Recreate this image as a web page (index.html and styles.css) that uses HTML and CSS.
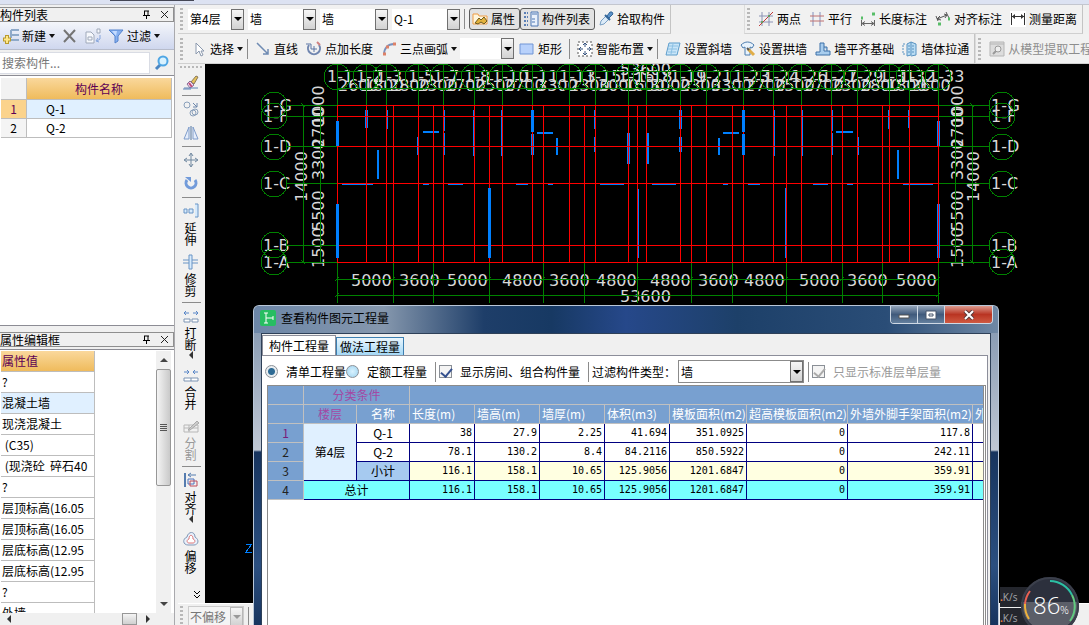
FILE: index.html
```html
<!DOCTYPE html>
<html lang="zh-CN">
<head>
    <meta charset="UTF-8">
    <meta name="viewport" content="width=device-width, initial-scale=1.0">
    <title>查看构件图元工程量</title>
    <link rel="stylesheet" href="styles.css">
</head>
<body>
<div class="app">
    <div class="strip"><span class="strip-mark"></span></div>
    <div class="main">

        <!-- left docks -->
        <aside class="docks">
            <section class="dock dock-list">
                <header class="dock-title">
                    <h2>构件列表</h2>
                    <button class="mini" aria-label="固定"><svg width="9" height="10" viewBox="0 0 9 10"><path d="M2 1h5M2.500 1v4M1 5.500h7M4.500 6v3M6 1v4" stroke="#000" fill="none"/></svg></button>
                    <button class="mini" aria-label="关闭"><svg width="9" height="9" viewBox="0 0 9 9"><path d="M1 1l7 7M8 1L1 8" stroke="#222" fill="none"/></svg></button>
                </header>
                <div class="dock-tools">
                    <button class="flat"><svg class="icon" viewBox="0 0 16 16"><path d="M8 2h8M8 7h8M8 12h8M8 2v8" stroke="#8ea9c9" stroke-width="2" fill="none"/><path d="M4 7v9M0 11.500h8" stroke="#b99a2e" stroke-width="4"/><path d="M4 8v7M1 11.500h6" stroke="#ffe889" stroke-width="2"/></svg>新建<i class="caret"></i></button>
                    <button class="flat" aria-label="删除"><svg class="icon" viewBox="0 0 16 16"><path d="M2 2l11 12M13 2L2 14" stroke="#747474" stroke-width="2" fill="none"/></svg></button>
                    <button class="flat" aria-label="复制"><svg class="icon" viewBox="0 0 16 16"><path d="M1 4h5l3 3v8H1zM3 9h4v3H3zM12 1h3v4h-3z" fill="#f6f8fc" stroke="#9fa9ba"/><path d="M15 7v4l-3 2M13 10l-2 3 3 1" fill="none" stroke="#86a5dc"/></svg></button>
                    <button class="flat"><svg class="icon" viewBox="0 0 16 16"><path d="M1 2h14l-5 6v5l-3 2V8z" fill="#86b0f0" stroke="#5583cd"/><path d="M4 3h5L8 8z" fill="#c5dcff"/></svg>过滤<i class="caret"></i></button>
                </div>
                <div class="search">
                    <input type="text" placeholder="搜索构件..." aria-label="搜索构件">
                    <button class="flat" aria-label="搜索"><svg class="icon" viewBox="0 0 16 16"><path d="M7 9l-5 5" stroke="#4b86c2" stroke-width="3"/><circle cx="9" cy="6" r="4.500" fill="#d9f2ff" stroke="#4fa6e4" stroke-width="2"/></svg></button>
                </div>
                <div class="list-box">
                    <table class="parts">
                        <tr><th></th><th>构件名称</th></tr>
                        <tr class="on"><td>1</td><td>Q-1</td></tr>
                        <tr><td>2</td><td>Q-2</td></tr>
                    </table>
                </div>
            </section>

            <section class="dock dock-props">
                <header class="dock-title">
                    <h2>属性编辑框</h2>
                    <button class="mini" aria-label="固定"><svg width="9" height="10" viewBox="0 0 9 10"><path d="M2 1h5M2.500 1v4M1 5.500h7M4.500 6v3M6 1v4" stroke="#000" fill="none"/></svg></button>
                    <button class="mini" aria-label="关闭"><svg width="9" height="9" viewBox="0 0 9 9"><path d="M1 1l7 7M8 1L1 8" stroke="#222" fill="none"/></svg></button>
                </header>
                <div class="props-box">
                    <div class="props-scroll">
                        <table class="props">
                            <tr><th>属性值</th></tr>
                            <tr><td>?</td></tr>
                            <tr class="on"><td>混凝土墙</td></tr>
                            <tr><td>现浇混凝土</td></tr>
                            <tr><td>&nbsp;(C35)</td></tr>
                            <tr><td>&nbsp;(现浇砼&nbsp; 碎石40</td></tr>
                            <tr><td>?</td></tr>
                            <tr><td>层顶标高(16.05</td></tr>
                            <tr><td>层顶标高(16.05</td></tr>
                            <tr><td>层底标高(12.95</td></tr>
                            <tr><td>层底标高(12.95</td></tr>
                            <tr><td>?</td></tr>
                            <tr><td>外墙</td></tr>
                        </table>
                    </div>
                    <div class="vbar">
                        <i class="tri up"></i>
                        <div class="vthumb"><i></i><i></i><i></i><i></i></div>
                        <i class="tri down"></i>
                    </div>
                </div>
                <div class="hbar"><i class="tri left"></i><div class="hthumb"></div><i class="tri right"></i></div>
            </section>
        </aside>

        <div class="work">
            <!-- toolbar row 1 -->
            <div class="bars">
                <div class="toolbar">
                    <i class="grip"></i>
                    <div class="combo short"><select aria-label="楼层"><option>第4层</option></select><i class="drop"></i></div>
                    <div class="combo"><select aria-label="构件类型"><option>墙</option></select><i class="drop"></i></div>
                    <div class="combo"><select aria-label="构件类别"><option>墙</option></select><i class="drop"></i></div>
                    <div class="combo"><select aria-label="构件"><option>Q-1</option></select><i class="drop"></i></div>
                    <i class="sep"></i>
                    <button class="tool pressed"><svg class="icon" viewBox="0 0 16 16"><path d="M1 13V3h5l1 2h8v8z" fill="#fff6dd" stroke="#ef9c45"/><path d="M3 12l4-5 2 2 3-3 3 4-3 3-3-2-3 2z" fill="#e3b23c" stroke="#6b5a1f"/></svg>属性</button>
                    <button class="tool pressed"><svg class="icon" viewBox="0 0 16 16"><path d="M1 2h4M1 6h4M1 10h4M1 14h4" stroke="#5b7fb5" stroke-width="2" stroke-dasharray="2 1"/><path d="M8 1h7v14H8z" fill="#e8f0fb" stroke="#4d77b3"/><path d="M9 3h5M9 8h3M9 11h3" stroke="#4d77b3"/></svg>构件列表</button>
                    <button class="tool"><svg class="icon" viewBox="0 0 16 16"><path d="M2 14l1-4 5-5 3 3-5 5z" fill="#dcebf8" stroke="#7aa0c4"/><path d="M7 4l5 5" stroke="#336699" stroke-width="2"/><path d="M9 5l3-4h2l1 2-4 4z" fill="#5c92c8" stroke="#336699"/></svg>拾取构件</button>
                </div>
                <div class="toolbar second">
                    <i class="grip"></i>
                    <button class="tool"><svg class="icon" viewBox="0 0 16 16"><path d="M4 1v14M11 1v14M1 5h14M1 11h14" stroke="#8b93b5"/><path d="M1 15L15 1" stroke="#c03a3a"/><circle cx="4" cy="11" r="1" fill="#52a852"/><circle cx="11" cy="5" r="1" fill="#52a852"/></svg>两点</button>
                    <button class="tool"><svg class="icon" viewBox="0 0 16 16"><path d="M4 1v14M11 1v14" stroke="#8290bd"/><path d="M1 5h14M1 10h14" stroke="#c07070"/></svg>平行</button>
                    <button class="tool"><svg class="icon" viewBox="0 0 16 16"><path d="M1.500 9v6M14.500 9v6M2 12.500h12M5 10.500l-3 2 3 2M11 10.500l3 2-3 2" stroke="#666" fill="none"/><path d="M1 7h2M12 3h3" stroke="#57bd67" stroke-width="3"/></svg>长度标注</button>
                    <button class="tool"><svg class="icon" viewBox="0 0 16 16"><path d="M1 5l2 5M11 1l3 6M2 8l10-4M5 5L2 8l4 1M9 3l3 1-2 3" stroke="#555" fill="none"/><path d="M3 13h3M13 8h2" stroke="#57bd67" stroke-width="3"/></svg>对齐标注</button>
                    <button class="tool"><svg class="icon" viewBox="0 0 16 16"><path d="M0 0h16v16H0z" fill="#fff"/><path d="M1.500 2v12M14.500 2v12M2 5.500h12" stroke="#333"/><path d="M5 3L2 5.500 5 8zM11 3l3 2.500L11 8z" fill="#333"/></svg>测量距离</button>
                </div>
            </div>

            <!-- toolbar row 2 -->
            <div class="bars low">
                <div class="toolbar">
                    <i class="grip"></i>
                    <button class="tool menu"><svg class="icon" viewBox="0 0 16 16"><path d="M5 2v11l3-3 2 5 2-1-2-4h3z" fill="#fff" stroke="#8a98ad"/></svg>选择<i class="caret"></i></button>
                    <i class="sep"></i>
                    <button class="tool"><svg class="icon" viewBox="0 0 16 16"><path d="M2 2l11 11M13 8v5H8" stroke="#6f8bb3" stroke-width="1.500" fill="none"/></svg>直线</button>
                    <button class="tool"><svg class="icon" viewBox="0 0 16 16"><path d="M3 4a6 6 0 1 0 10 0" stroke="#7086b0" stroke-width="2" fill="none"/><path d="M0 3h5v5M8 5v6M5 8h6" stroke="#5d76a6" fill="none"/><path d="M11 1l3 3" stroke="#d08080" stroke-width="2"/></svg>点加长度</button>
                    <button class="tool menu"><svg class="icon" viewBox="0 0 16 16"><path d="M3 14C3 7 7 3 13 3" stroke="#7991bd" stroke-width="2" fill="none"/><path d="M2 13h3M5 6h3M12 3h3" stroke="#dd8168" stroke-width="3"/></svg>三点画弧<i class="caret"></i></button>
                    <div class="combo narrow"><select aria-label="画法"><option></option></select><i class="drop"></i></div>
                    <button class="tool"><svg class="icon" viewBox="0 0 16 16"><path d="M1 3h13v10H1z" fill="#b8d1fb" stroke="#7195d5"/></svg>矩形</button>
                    <i class="sep"></i>
                    <button class="tool menu"><svg class="icon" viewBox="0 0 16 16"><path d="M1 1h14v14H1z" fill="#fff" stroke="#555" stroke-dasharray="2 2"/><path d="M8 2v4M8 10v4M2 8h4M10 8h4M6 4l2-2 2 2M6 12l2 2 2-2M4 6L2 8l2 2M12 6l2 2-2 2" stroke="#35527e" fill="none"/></svg>智能布置<i class="caret"></i></button>
                    <i class="sep"></i>
                    <button class="tool"><svg class="icon" viewBox="0 0 16 16"><path d="M4 2h11l-3 12H1z" fill="#c9e5f8" stroke="#5d9dcb"/><path d="M4 5h9M3 8h9M3 11h8M8 3L6 13" stroke="#8dc1e4"/></svg>设置斜墙</button>
                    <button class="tool"><svg class="icon" viewBox="0 0 16 16"><path d="M1 4c4-4 9-4 13 0l-2 3-2-1v8H5V6L3 7z" fill="#e8f3fd" stroke="#4c7cae"/><path d="M8 8l6 6" stroke="#e0ad48" stroke-width="3"/><path d="M7 7l2 2" stroke="#555" stroke-width="2"/></svg>设置拱墙</button>
                    <button class="tool"><svg class="icon" viewBox="0 0 16 16"><path d="M5 2h4v8h6v4H1v-3h4zM9 6h3v4" fill="#a8cdee" stroke="#3d71a8"/></svg>墙平齐基础</button>
                    <button class="tool"><svg class="icon" viewBox="0 0 16 16"><path d="M5 3l4-2v13l-4 1zM9 1l5 2v11l-5 1" fill="#b9dcf3" stroke="#5892c1"/><path d="M3 3H1v10h2M7 4v9M11 4v9" stroke="#5892c1" stroke-dasharray="2 1" fill="none"/></svg>墙体拉通</button>
                </div>
                <div class="toolbar rest">
                    <i class="grip"></i>
                    <button class="tool" disabled><svg class="icon" viewBox="0 0 16 16"><path d="M1 1h14v14H1z" fill="#ddd" stroke="#b5b5b5"/><path d="M1 3h14" stroke="#b5b5b5"/><circle cx="9" cy="8" r="3" fill="#eee" stroke="#999"/><path d="M7 10l-3 3" stroke="#999" stroke-width="2"/></svg>从模型提取工程量</button>
                </div>
            </div>

            <div class="stage">
                <nav class="side">
                    <i class="side-grip"></i>
                    <button aria-label="删除"><svg class="icon" viewBox="0 0 16 16"><path d="M8 8l5-6 2 1-4 7z" fill="#e6c25c" stroke="#8a7a5a"/><path d="M4 10l3-3 4 4-4 3z" fill="#f3e3ef" stroke="#8a6c9a"/><path d="M6 9l3 4" stroke="#c14a77" stroke-width="2"/><path d="M1 14h14M0 15h8" stroke="#5f83b5"/></svg></button>
                    <i class="rule"></i>
                    <button aria-label="复制"><svg class="icon" viewBox="0 0 16 16"><circle cx="4" cy="4" r="3" fill="none" stroke="#8aa0bb"/><path d="M10 2l4 4M14 2v4h-4" stroke="#6c86aa" fill="none"/><circle cx="10" cy="12" r="3" fill="none" stroke="#8aa0bb"/><circle cx="12" cy="11" r="3" fill="none" stroke="#8aa0bb"/></svg></button>
                    <button aria-label="镜像"><svg class="icon" viewBox="0 0 16 16"><path d="M6 2v12H1zM10 2v12h5z" fill="#e6eefb" stroke="#7f9dcb"/><path d="M8 1v14" stroke="#51749f"/></svg></button>
                    <i class="rule"></i>
                    <button aria-label="移动"><svg class="icon" viewBox="0 0 16 16"><path d="M8 2v12M2 8h12M6 4l2-3 2 3M6 12l2 3 2-3M4 6L1 8l3 2M12 6l3 2-3 2" stroke="#6f879f" fill="none"/></svg></button>
                    <button aria-label="旋转"><svg class="icon" viewBox="0 0 16 16"><path d="M4 4a5 5 0 1 0 8 0" stroke="#729bda" stroke-width="3" fill="none"/><path d="M2 1h6v5z" fill="#729bda"/></svg></button>
                    <i class="rule"></i>
                    <button><svg class="icon" viewBox="0 0 16 16"><path d="M12 1h3v13h-3M1 6h3v4H1zM6 6h4v4H6z" fill="#d6eafc" stroke="#6994c5"/></svg>延伸</button>
                    <button><svg class="icon" viewBox="0 0 16 16"><path d="M6 1h3v14H6z" fill="#d6eafc" stroke="#6994c5"/><path d="M0 6h6M0 9h6M9 6h6M9 9h6" stroke="#6994c5"/></svg>修剪</button>
                    <i class="rule"></i>
                    <button><svg class="icon" viewBox="0 0 16 16"><path d="M1 11h6v3H1zM9 11h6v3H9z" fill="#fff" stroke="#7d94b3"/><path d="M6 5H1M10 5h5M3 3L1 5l2 2M13 3l2 2-2 2" stroke="#5986c7" fill="none"/></svg>打断<i class="tri left"></i></button>
                    <button><svg class="icon" viewBox="0 0 16 16"><path d="M1 11h14v3H1zM8 11v3" fill="#fff" stroke="#7d94b3"/><path d="M1 5h5M15 5h-5M4 3l2 2-2 2M12 3l-2 2 2 2" stroke="#5986c7" fill="none"/></svg>合并</button>
                    <button disabled><svg class="icon" viewBox="0 0 16 16"><path d="M1 7h14v7H1zM1 10h14M6 7v7" fill="none" stroke="#b7b7b7"/><path d="M5 12l9-9 2 2-9 7z" fill="#ccc" stroke="#aaa"/></svg>分割</button>
                    <i class="rule"></i>
                    <button><svg class="icon" viewBox="0 0 16 16"><path d="M2 1v14" stroke="#557caf" stroke-width="2"/><path d="M5 7h6v5H5z" fill="none" stroke="#4a72bd"/><path d="M7 9h7v5H7z" fill="none" stroke="#bd4a58"/><path d="M5 3h8M8 1L5 3l3 2" fill="none" stroke="#557caf"/></svg>对齐<i class="tri left"></i></button>
                    <button><svg class="icon" viewBox="0 0 16 16"><path d="M4 6C5 0 12 0 12 6c5 3 3 8-1 8H5C0 14-1 8 4 6z" fill="#e8f1fc" stroke="#8298b6"/><path d="M6 8c0-5 4-5 4 0 3 1 2 4 0 4H6c-2 0-3-3 0-4z" fill="#fff" stroke="#d77"/></svg>偏移</button>
                    <svg class="more" width="9" height="9" viewBox="0 0 9 9"><path d="M1 1l3 3 3-3M1 5l3 3 3-3" stroke="#000" fill="none"/></svg>
                </nav>

                <!-- plan drawing, user units are screen pixels -->
                <div class="canvas">
                    <svg width="884" height="540" viewBox="205 64 884 540">
                        <g class="dims">
                            <text x="327" y="82">1-1</text><text x="356" y="82">1-2</text><text x="376" y="82">1-3</text><text x="408" y="82">1-5</text><text x="433" y="82">1-7</text><text x="464" y="82">1-8</text><text x="492" y="82">1-10</text><text x="522" y="82">1-11</text><text x="559" y="82">1-13</text><text x="585" y="82">1-15</text><text x="618" y="82">1-16</text><text x="636" y="82">1-18</text><text x="670" y="82">1-19</text><text x="696" y="82">1-21</text><text x="733" y="82">1-23</text><text x="763" y="82">1-24</text><text x="791" y="82">1-26</text><text x="821" y="82">1-27</text><text x="847" y="82">1-29</text><text x="879" y="82">1-31</text><text x="899" y="82">1-32</text><text x="928" y="82">1-33</text>
                            <text x="338" y="91">2600</text><text x="363" y="91">1800</text><text x="389" y="91">2800</text><text x="417" y="91">2300</text><text x="445" y="91">2700</text><text x="475" y="91">2500</text><text x="504" y="91">2700</text><text x="537" y="91">3300</text><text x="569" y="91">2300</text><text x="598" y="91">3000</text><text x="624" y="91">1600</text><text x="650" y="91">3000</text><text x="680" y="91">2300</text><text x="711" y="91">3300</text><text x="745" y="91">2700</text><text x="774" y="91">2500</text><text x="803" y="91">2700</text><text x="831" y="91">2300</text><text x="860" y="91">2800</text><text x="886" y="91">1800</text><text x="910" y="91">2600</text>
                            <text x="620" y="75">53600</text><text x="620" y="302">53600</text>
                            <text x="351" y="286">5000</text><text x="399" y="286">3600</text><text x="447" y="286">5000</text><text x="502" y="286">4800</text><text x="549" y="286">3600</text><text x="596" y="286">4800</text><text x="650" y="286">4800</text><text x="698" y="286">3600</text><text x="744" y="286">4800</text><text x="799" y="286">5000</text><text x="847" y="286">3600</text><text x="896" y="286">5000</text>
                            <text x="263" y="111">1-G</text><text x="263" y="122">1-F</text><text x="263" y="152">1-D</text><text x="263" y="189">1-C</text><text x="263" y="251">1-B</text><text x="263" y="268">1-A</text>
                            <text x="991" y="111">1-G</text><text x="991" y="122">1-F</text><text x="991" y="152">1-D</text><text x="991" y="189">1-C</text><text x="991" y="251">1-B</text><text x="991" y="268">1-A</text>
                            <text transform="translate(307 202) rotate(-90)">14000</text>
                            <text transform="translate(324 268) rotate(-90)">1500</text><text transform="translate(324 231) rotate(-90)">5500</text><text transform="translate(324 180) rotate(-90)">3300</text><text transform="translate(324 148) rotate(-90)">2700</text><text transform="translate(324 126) rotate(-90)">1000</text>
                            <text transform="translate(979 202) rotate(-90)">14000</text>
                            <text transform="translate(963 268) rotate(-90)">1500</text><text transform="translate(963 231) rotate(-90)">5500</text><text transform="translate(963 180) rotate(-90)">3300</text><text transform="translate(963 148) rotate(-90)">2700</text><text transform="translate(963 126) rotate(-90)">1000</text>
                        </g>
                        <g class="axes">
                            <path d="M337 64v41M366 64v41M386 64v41M418 64v41M443 64v41M474 64v41M502 64v41M532 64v41M569 64v41M595 64v41M628 64v41M646 64v41M680 64v41M706 64v41M743 64v41M773 64v41M801 64v41M831 64v41M857 64v41M889 64v41M909 64v41M938 64v41"/>
                            <path d="M337 262v41M393 262v41M433 262v41M489 262v41M543 262v41M584 262v41M637 262v41M691 262v41M732 262v41M786 262v41M842 262v41M882 262v41M938 262v41"/>
                            <path d="M337 71h601M337 88h601M337 279h601M337 295h601"/>
                            <path d="M287 105h50M287 116h50M287 146h50M287 183h50M287 245h50M287 262h50M938 105h51M938 116h51M938 146h51M938 183h51M938 245h51M938 262h51"/>
                            <path d="M303 105v157M320 105v157M955 105v157M972 105v157"/>
                            <path d="M335 281l4-4M391 281l4-4M431 281l4-4M487 281l4-4M541 281l4-4M582 281l4-4M635 281l4-4M689 281l4-4M730 281l4-4M784 281l4-4M840 281l4-4M880 281l4-4M936 281l4-4M335 297l4-4M936 297l4-4M301 103l4 4M301 260l4 4M970 103l4 4M970 260l4 4"/>
                        </g>
                        <g class="bubbles">
                            <circle cx="337" cy="77" r="13"/><circle cx="366" cy="77" r="13"/><circle cx="386" cy="77" r="13"/><circle cx="418" cy="77" r="13"/><circle cx="443" cy="77" r="13"/><circle cx="474" cy="77" r="13"/><circle cx="502" cy="77" r="13"/><circle cx="532" cy="77" r="13"/><circle cx="569" cy="77" r="13"/><circle cx="595" cy="77" r="13"/><circle cx="628" cy="77" r="13"/><circle cx="646" cy="77" r="13"/><circle cx="680" cy="77" r="13"/><circle cx="706" cy="77" r="13"/><circle cx="743" cy="77" r="13"/><circle cx="773" cy="77" r="13"/><circle cx="801" cy="77" r="13"/><circle cx="831" cy="77" r="13"/><circle cx="857" cy="77" r="13"/><circle cx="889" cy="77" r="13"/><circle cx="909" cy="77" r="13"/><circle cx="938" cy="77" r="13"/>
                            <circle cx="274" cy="105" r="13"/><circle cx="274" cy="116" r="13"/><circle cx="274" cy="147" r="13"/><circle cx="274" cy="184" r="13"/><circle cx="274" cy="245" r="13"/><circle cx="274" cy="262" r="13"/>
                            <circle cx="1002" cy="105" r="13"/><circle cx="1002" cy="116" r="13"/><circle cx="1002" cy="147" r="13"/><circle cx="1002" cy="184" r="13"/><circle cx="1002" cy="245" r="13"/><circle cx="1002" cy="262" r="13"/>
                        </g>
                        <g class="walls">
                            <path class="w3" d="M337 121v25M337 204v54M366 110v18M489 188v70M532 110v22M532 134v21M628 133v31M680 110v19M680 137v15M743 110v22M743 134v21M938 121v25M938 204v54"/>
                            <path class="w2" d="M378 150v29M557 138v17M648 133v31M719 138v17M898 150v29M423 132h16M537 133h16M723 133h16M836 132h17"/>
                            <path d="M387 110v19M417 137v18M444 110v21M444 133v22M473 110v46M501 110v46M594 110v19M594 137v15M774 110v46M802 110v46M832 110v21M832 133v22M858 137v18M888 110v19M908 110v18M638 189v69M785 188v70"/>
                            <path d="M342 184h31M423 184h6M448 184h15M516 184h12M548 184h5M600 184h24M652 184h24M723 184h5M748 184h12M813 184h15M847 184h6M903 184h30"/>
                            <path d="M246 544h6l-6 8h6"/>
                        </g>
                        <g class="grid">
                            <path d="M337 105h602M337 116h602M337 146h602M337 183h602M337 245h602M337 262h602"/>
                            <path d="M337 105v157M366 105v157M386 105v157M393 105v157M418 105v157M433 105v157M443 105v157M474 105v157M489 105v157M502 105v157M532 105v157M543 105v157M569 105v157M584 105v157M595 105v157M628 105v157M637 105v157M646 105v157M680 105v157M691 105v157M706 105v157M732 105v157M743 105v157M773 105v157M786 105v157M801 105v157M831 105v157M842 105v157M857 105v157M882 105v157M889 105v157M909 105v157M938 105v157"/>
                        </g>
                        <!-- outer walls cover their grid line -->
                        <path class="walls w3" d="M337 121v25M337 204v54M489 188v70M743 110v22M743 134v21M532 110v22"/>
                    </svg>
                </div>
            </div>

            <div class="footbar">
                <i class="grip"></i>
                <div class="combo short off"><select aria-label="偏移方式" disabled><option>不偏移</option></select><i class="drop"></i></div>
                <i class="sep"></i>
            </div>
        </div>
    </div>

    <!-- quantity window -->
    <div class="dialog" role="dialog" aria-label="查看构件图元工程量">
        <header class="titlebar">
            <svg class="logo" viewBox="0 0 16 16"><rect width="16" height="16" rx="2" fill="#27bd62"/><path d="M4 3h4M6 3v10M4 13h4M6 8h7M13 6v4" stroke="#fff" fill="none"/></svg>
            <h1>查看构件图元工程量</h1>
            <div class="winbtns">
                <button aria-label="最小化"><svg width="12" height="10" viewBox="0 0 12 10"><path d="M1 5h10v3H1z" fill="#fff" stroke="#555"/></svg></button>
                <button aria-label="最大化"><svg width="12" height="10" viewBox="0 0 12 10"><path d="M1 1h10v8H1zM4 4h4v2H4z" fill="#fff" stroke="#46546a"/></svg></button>
                <button class="close" aria-label="关闭"><svg width="12" height="10" viewBox="0 0 12 10"><path d="M2 1l8 8M10 1L2 9" stroke="#5b3a3a" stroke-width="4"/><path d="M2 1l8 8M10 1L2 9" stroke="#fff" stroke-width="2"/></svg></button>
            </div>
        </header>
        <div class="client">
            <div class="tabs">
                <button class="tab active">构件工程量</button>
                <button class="tab">做法工程量</button>
            </div>
            <div class="page">
                <div class="options">
                    <label class="opt"><input type="radio" name="kind" checked>清单工程量</label>
                    <label class="opt"><input type="radio" name="kind">定额工程量</label>
                    <i class="sep"></i>
                    <label class="opt wide"><input type="checkbox" checked>显示房间、组合构件量</label>
                    <i class="sep"></i>
                    <label for="filter">过滤构件类型：</label>
                    <div class="combo filter"><select id="filter"><option>墙</option></select><i class="drop"></i></div>
                    <i class="sep"></i>
                    <label class="opt wide off"><input type="checkbox" checked disabled>只显示标准层单层量</label>
                </div>
                <div class="sheet">
                    <table class="qty">
                        <colgroup>
                            <col class="c-no"><col class="c-key"><col class="c-key">
                            <col class="c-num"><col class="c-num"><col class="c-num"><col class="c-num">
                            <col class="c-form"><col class="c-over"><col class="c-scaf"><col class="c-form">
                        </colgroup>
                        <thead>
                            <tr><th></th><th colspan="2" class="key">分类条件</th><th colspan="8"></th></tr>
                            <tr><th></th><th class="key">楼层</th><th>名称</th><th class="l">长度(m)</th><th class="l">墙高(m)</th><th class="l">墙厚(m)</th><th class="l">体积(m3)</th><th class="l">模板面积(m2)</th><th class="l">超高模板面积(m2)</th><th class="l">外墙外脚手架面积(m2)</th><th class="l">外墙内</th></tr>
                        </thead>
                        <tbody>
                            <tr><th class="key first">1</th><td rowspan="3" class="floor">第4层</td><td class="name">Q-1</td><td>38</td><td>27.9</td><td>2.25</td><td>41.694</td><td>351.0925</td><td>0</td><td>117.8</td><td></td></tr>
                            <tr><th>2</th><td class="name">Q-2</td><td>78.1</td><td>130.2</td><td>8.4</td><td>84.2116</td><td>850.5922</td><td>0</td><td>242.11</td><td></td></tr>
                            <tr class="sub"><th>3</th><td class="name">小计</td><td>116.1</td><td>158.1</td><td>10.65</td><td>125.9056</td><td>1201.6847</td><td>0</td><td>359.91</td><td></td></tr>
                            <tr class="total"><th>4</th><td colspan="2" class="name">总计</td><td>116.1</td><td>158.1</td><td>10.65</td><td>125.9056</td><td>1201.6847</td><td>0</td><td>359.91</td><td></td></tr>
                        </tbody>
                    </table>
                </div>
            </div>
        </div>
    </div>

    <!-- floating memory ball -->
    <div class="ball">
        <div class="speed"><span><b>.</b>K/s</span><span><b>.</b>K/s</span></div>
        <svg class="disc" viewBox="0 0 60 60">
            <circle cx="30" cy="30" r="29" fill="#2c303d"/>
            <path d="M1 26h58a29 29 0 0 1-58 0z" fill="#5b5e68"/>
            <circle cx="30" cy="30" r="28" fill="none" stroke="#3b3f4b" stroke-width="2"/>
            <path d="M30 5a25 25 0 0 1 22 14" stroke="#2cc0a4" stroke-width="2" fill="none"/>
            <path d="M52 19a25 25 0 0 1-2 26" stroke="#62cc80" stroke-width="2" fill="none"/>
            <path d="M9 43a25 25 0 0 1-4-15" stroke="#eeb13c" stroke-width="2" fill="none"/>
            <path d="M5 28a25 25 0 0 1 5-13" stroke="#ea6152" stroke-width="2" fill="none"/>
            <text x="13" y="38" class="big">86</text>
            <text x="40" y="38" class="pct">%</text>
        </svg>
    </div>
</div>
</body>
</html>
```
FILE: styles.css
```css
*{
    padding: 0;
    margin: 0;
    box-sizing: border-box;
}

body{
    height: 100vh;
    overflow: hidden;
    background-color: #f0f0f0;
    font-family: "Noto Sans CJK SC", sans-serif;
    font-size: 12px;
    line-height: 16px;
    color: #000;
}

button, select, input{
    font: inherit;
    color: inherit;
    background: none;
    border: none;
    border-radius: 0;
}

h1, h2{
    font-size: 12px;
    font-weight: normal;
}

.app{
    position: relative;
    display: flex;
    flex-direction: column;
    height: 100vh;
    overflow: hidden;
}

.strip{
    flex: none;
    height: 5px;
    padding-left: 110px;
    background-color: #dce2f2;
    border-bottom: 1px solid #c3c6cf;
}

.strip-mark{
    display: block;
    width: 84px;
    height: 1px;
    background-color: #444655;
}

.main{
    flex: 1;
    min-height: 0;
    display: flex;
}

.icon{
    flex: none;
    width: 16px;
    height: 16px;
}

.caret{
    flex: none;
    border: 3px solid transparent;
    border-top: 4px solid #111;
    border-bottom: none;
}

.tri{
    flex: none;
    width: 0;
    height: 0;
    border: 4px solid transparent;
}

.tri.up{ border-bottom-color: #444; border-top: none; }
.tri.down{ border-top-color: #444; border-bottom: none; }
.tri.left{ border-right-color: #333; border-left: none; }
.tri.right{ border-left-color: #333; border-right: none; }

/* docks */
.docks{
    flex: none;
    width: 175px;
    margin-right: 3px;
    display: flex;
    flex-direction: column;
    border-right: 1px solid #a9a9ad;
}

.dock{
    display: flex;
    flex-direction: column;
}

.dock-list{
    flex: none;
    height: 321px;
    padding-top: 2px;
}

.dock-props{
    flex: 1;
    min-height: 0;
    padding-top: 6px;
}

.dock-title{
    flex: none;
    display: flex;
    align-items: center;
    gap: 9px;
    height: 15px;
    padding-right: 4px;
    border: 1px solid #8f8f8f;
    border-left: none;
}

.dock-title h2{
    flex: 1;
    line-height: 13px;
}

.mini{
    display: flex;
}

.flat{
    display: flex;
    align-items: center;
    gap: 3px;
}

.dock-tools{
    flex: none;
    display: flex;
    align-items: center;
    gap: 7px;
    height: 28px;
    padding-left: 3px;
    background: linear-gradient(#f4f6fb, #cfd7ee);
    border-bottom: 1px solid #b7bccb;
}

.search{
    flex: none;
    display: flex;
    align-items: center;
    height: 26px;
    border-bottom: 1px solid #8c8c94;
}

.search input{
    width: 150px;
    height: 22px;
    margin-right: 4px;
    padding-left: 2px;
    background-color: #fff;
    border: 1px solid #d9dce4;
    border-left: none;
}

.search input::placeholder{
    color: #777;
    opacity: 1;
}

.list-box{
    flex: 1;
    padding: 2px 2px 0 1px;
    background-color: #fff;
    border-bottom: 1px solid #8c8c94;
}

.parts, .props{
    border-collapse: separate;
    border-spacing: 0;
    table-layout: fixed;
    width: 100%;
}

.parts th, .parts td{
    height: 19px;
    line-height: 16px;
    border-right: 1px solid #bdbdbd;
    border-bottom: 1px solid #bdbdbd;
    font-weight: normal;
}

.parts th{
    height: 22px;
    color: #5d0055;
    background: linear-gradient(#fad89c, #efbb5c);
}

.parts th:first-child{
    width: 26px;
    background: #f2f2f2;
}

.parts td:first-child{
    text-align: center;
    background-color: #f4f4f4;
}

.parts td:last-child{
    padding-left: 19px;
}

.parts .on td{
    background-color: #e0f0ff;
}

.parts .on td:first-child{
    color: #5d0055;
    background-color: #fbd38c;
}

.props-box{
    flex: 1;
    min-height: 0;
    display: flex;
    margin-top: 2px;
    padding: 1px 3px 0 1px;
    background-color: #fff;
    border-top: 1px solid #8c8c94;
}

.props-scroll{
    flex: 1;
    overflow: hidden;
}

.props{
    width: 94px;
}

.props th, .props td{
    height: 21px;
    line-height: 16px;
    padding-left: 1px;
    text-align: left;
    font-weight: normal;
    white-space: nowrap;
    border-right: 1px solid #bdbdbd;
    border-bottom: 1px solid #bdbdbd;
}

.props th{
    color: #5d0055;
    background: linear-gradient(#fad89c, #efbb5c);
}

.props .on td{
    background-color: #e0f0ff;
}

.vbar{
    flex: none;
    width: 15px;
    display: flex;
    flex-direction: column;
    align-items: center;
    padding: 7px 0;
    background-color: #f0f0f0;
}

.vthumb{
    width: 15px;
    height: 117px;
    margin: 7px 0 auto;
    display: flex;
    flex-direction: column;
    align-items: center;
    justify-content: center;
    gap: 1px;
    background: linear-gradient(to right, #f4f4f4, #c9c9c9);
    border: 1px solid #979797;
    border-radius: 2px;
}

.vthumb i{
    width: 7px;
    height: 1px;
    background-color: #555;
}

.hbar{
    flex: none;
    height: 12px;
    display: flex;
    align-items: center;
    padding: 0 24px 0 7px;
    background-color: #f0f0f0;
}

.hthumb{
    width: 15px;
    height: 12px;
    margin: 0 9px 0 auto;
    background: linear-gradient(#f4f4f4, #d0d0d0);
    border: 1px solid #979797;
}

/* toolbars */
.work{
    flex: 1;
    min-width: 0;
    display: flex;
    flex-direction: column;
}

.bars{
    flex: none;
    display: flex;
    height: 29px;
    white-space: nowrap;
    overflow: hidden;
}

.bars.low{
    height: 30px;
}

.toolbar{
    flex: none;
    display: flex;
    align-items: center;
    border-right: 1px solid #c4c4c4;
    border-bottom: 1px solid #d0d0d0;
    background-color: #f1f1f1;
}

.toolbar.second{
    margin-left: 73px;
    border-left: 1px solid #dcdcdc;
}

.toolbar.rest{
    flex: 1;
    border-left: 1px solid #dcdcdc;
}

.grip{
    flex: none;
    width: 3px;
    height: 22px;
    margin: 0 5px 0 2px;
    background: repeating-linear-gradient(#b8b8b8 0 2px, #f1f1f1 2px 4px);
}

.sep{
    flex: none;
    width: 1px;
    height: 20px;
    margin: 0 4px 0 2px;
    background-color: #8b8b8b;
}

.combo + .sep{
    margin-left: 0;
}

.tool{
    flex: none;
    display: flex;
    align-items: center;
    gap: 3px;
    height: 22px;
    padding: 0 5px 0 3px;
}

.tool.menu{
    padding-right: 2px;
}

.tool:disabled{
    color: #8d8d8d;
}

.tool.pressed{
    padding: 0 4px 0 2px;
    background-color: #e2e2e2;
    border: 1px solid #5c5c5c;
    border-radius: 3px;
}

.combo{
    flex: none;
    display: flex;
    width: 68px;
    height: 21px;
    margin-right: 4px;
    background-color: #fff;
}

.combo select{
    flex: 1;
    min-width: 0;
    padding-left: 2px;
    appearance: none;
    outline: none;
}

.combo.short{ width: 56px; }
.combo.narrow{ width: 54px; margin: 0 2px 0 1px; }

.drop{
    flex: none;
    width: 13px;
    display: flex;
    align-items: center;
    justify-content: center;
    background: linear-gradient(#f6f6f6, #d2d2d2);
    border: 1px solid #707070;
}

.drop::after{
    content: "";
    border: 4px solid transparent;
    border-top-color: #000;
    border-bottom: none;
}

.combo.off{
    color: #777;
    background-color: #f4f4f4;
    border: 1px solid #ccc;
}

.combo.off select{
    opacity: 1;
    padding-left: 1px;
}

.combo.off .drop{
    border-color: #b8b8b8;
}

.combo.off .drop::after{
    border-top-color: #999;
}

.stage{
    flex: 1;
    min-height: 0;
    display: flex;
}

.side{
    flex: none;
    width: 27px;
    display: flex;
    flex-direction: column;
    align-items: center;
    background-color: #f1f1f1;
}

.side-grip{
    width: 24px;
    height: 2px;
    margin: 2px 0;
    background: repeating-linear-gradient(to right, #b8b8b8 0 2px, #f1f1f1 2px 4px);
}

.side button{
    flex: none;
    width: 24px;
    display: flex;
    flex-direction: column;
    align-items: center;
    gap: 3px;
    padding: 4px 6px 4px 4px;
    line-height: 12px;
}

.side button .tri{
    margin: -3px 0 0;
}

.side button:disabled{
    color: #999;
}

.rule{
    flex: none;
    width: 19px;
    height: 1px;
    margin: 1px 0;
    background-color: #8b8b8b;
}

.more{
    flex: none;
    margin: 12px 0 0 12px;
}

.footbar{
    flex: none;
    display: flex;
    align-items: center;
    height: 22px;
    padding-top: 4px;
    border-top: 1px solid #fff;
}

.footbar .sep{
    margin-left: 0;
}

/* drawing */
.canvas{
    flex: 1;
    min-width: 0;
    overflow: hidden;
    background-color: #000;
}

.canvas svg{
    display: block;
}

.dims text{
    font-family: "DejaVu Sans", sans-serif;
    font-size: 16px;
    fill: #d8d8d8;
}

.axes, .bubbles, .walls, .grid{
    fill: none;
    shape-rendering: crispEdges;
}

.axes, .bubbles{ stroke: #008200; }
.walls{ stroke: #0080ff; }
.w2{ stroke-width: 2px; }
.w3{ stroke-width: 3px; }
.grid{ stroke: #f00; }

/* dialog */
.dialog{
    position: absolute;
    top: 305px;
    left: 253px;
    right: 90px;
    bottom: 0;
    display: flex;
    flex-direction: column;
    padding: 0 7px;
    border: 1px solid #b9c7d8;
    border-bottom: none;
    border-radius: 6px 6px 0 0;
    background: linear-gradient(to bottom, #7f93ad, #c0c8d4 144px, #17345e 146px, #2b4f80 260px, #17345e);
}

.titlebar{
    flex: none;
    display: flex;
    align-items: center;
    gap: 5px;
    height: 27px;
    margin: 0 -7px;
    padding: 0 0 4px 6px;
    border-radius: 5px 5px 0 0;
    background: linear-gradient(to right, #6c86a7, #8597ad 130px, #1e3e69 230px, #173963 40%, #26488a 50%, #1d4069 65%, #2a4d77 85%, #6f88a5);
}

.logo{
    flex: none;
    width: 16px;
    height: 16px;
}

.titlebar h1{
    flex: 1;
}

.winbtns{
    align-self: flex-start;
    display: flex;
    margin-right: 5px;
    border: 1px solid #cfd9e5;
    border-top: none;
    border-radius: 0 0 4px 4px;
    overflow: hidden;
}

.winbtns button{
    width: 27px;
    height: 17px;
    display: flex;
    align-items: center;
    justify-content: center;
    background: linear-gradient(#93a4b9, #405a7c 50%, #64809e);
    border-right: 1px solid #cfd9e5;
}

.winbtns .close{
    width: 47px;
    border-right: none;
    background: linear-gradient(#dd9a8e, #b93422 50%, #cf5a42);
}

.client{
    flex: 1;
    min-height: 0;
    display: flex;
    flex-direction: column;
    padding: 1px 2px 0 0;
    background-color: #f0f0f0;
    border: 1px solid #2e4058;
    border-bottom: none;
}

.tabs{
    flex: none;
    display: flex;
    align-items: flex-end;
    height: 20px;
}

.tab{
    height: 18px;
    padding: 0 3px;
    line-height: 16px;
    background: linear-gradient(#eaf6fd, #a4d8f6);
    border: 1px solid #3c7fb1;
    border-bottom: none;
}

.tab.active{
    height: 20px;
    padding: 0 6px;
    background: #fff;
    border: 1px solid #8c8e9a;
    border-bottom: none;
}

.page{
    flex: 1;
    min-height: 0;
    display: flex;
    flex-direction: column;
    padding-top: 2px;
    background-color: #fff;
    border: 1px solid #8c8e9a;
    border-width: 1px 1px 0 0;
}

.options{
    flex: none;
    display: flex;
    align-items: center;
    height: 27px;
    padding-left: 3px;
    white-space: nowrap;
}

.options .sep{
    margin: 0 3px 0 8px;
}

.options .combo{
    width: 126px;
    height: 23px;
    margin: 0 -4px 0 2px;
    border: 1px solid #8b8b8b;
}

.opt{
    display: flex;
    align-items: center;
    gap: 7px;
}

.opt.wide{
    gap: 8px;
}

.opt.off{
    color: #999;
}

.opt input{
    appearance: none;
    flex: none;
    width: 13px;
    height: 13px;
    border: 1px solid #8a8f96;
    background-color: #f4f4f4;
}

.opt input[type="radio"]{
    border-radius: 50%;
    background: radial-gradient(#d9f2ff, #9ed3ef);
    margin-right: 1px;
}

.opt input[type="radio"]:checked{
    background: radial-gradient(#2d6a94 0 3px, #e8edf0 4px);
}

.opt input[type="checkbox"]:checked::after{
    content: "";
    display: block;
    width: 5px;
    height: 9px;
    margin: 0 0 0 3px;
    border: solid #34508e;
    border-width: 0 2px 2px 0;
    transform: rotate(40deg);
}

.opt.off input[type="checkbox"]:checked::after{
    border-color: #aaa;
}

.sheet{
    flex: 1;
    min-height: 0;
    overflow: hidden;
    margin: 0 1px 0 5px;
    border: 1px solid #8b8b8b;
    border-right: 3px double #8b8b8b;
    border-bottom: none;
}

.qty{
    width: 705px;
    table-layout: fixed;
    border-collapse: separate;
    border-spacing: 0;
}

.c-no{ width: 36px; }
.c-key{ width: 53px; }
.c-num{ width: 65px; }
.c-form{ width: 77px; }
.c-over{ width: 101px; }
.c-scaf{ width: 125px; }

.qty th{
    height: 19px;
    line-height: 16px;
    font-weight: normal;
    white-space: nowrap;
    overflow: hidden;
    color: #fff;
    background-color: #78a0d0;
    border-right: 1px solid #c0c0c0;
    border-bottom: 1px solid #c0c0c0;
}

.qty th.l{
    padding-left: 2px;
    text-align: left;
}

.qty th.key{
    color: #a349a4;
}

.qty tbody th{
    color: #222;
}

.qty tbody th.first{
    color: #7a1d7a;
}

.qty td{
    height: 19px;
    padding-right: 2px;
    line-height: 16px;
    font-family: "DejaVu Sans Mono", "Noto Sans CJK SC", monospace;
    font-size: 10px;
    text-align: right;
    border-right: 1px solid #000080;
    border-bottom: 1px solid #000080;
}

.qty td.name, .qty td.floor{
    padding: 0;
    font-family: "Noto Sans CJK SC", sans-serif;
    font-size: 12px;
    text-align: center;
}

.qty .floor{
    background-color: #e0f0ff;
}

.qty .sub td{ background-color: #ffffe1; }
.qty .sub .name{ background-color: #a6caf0; }
.qty .total td{ background-color: #78ffff; }

/* floating ball */
.ball{
    position: absolute;
    right: 9px;
    bottom: -11px;
    display: flex;
    align-items: center;
}

.speed{
    align-self: flex-start;
    width: 50px;
    margin: 11px -30px 0 0;
    display: flex;
    flex-direction: column;
    gap: 1px;
}

.speed span{
    height: 20px;
    line-height: 20px;
    font-family: "Open Sans", sans-serif;
    font-size: 10px;
    color: #a4a6ac;
    background-color: #24262d;
}

.speed b{
    color: #f07c3c;
}

.disc{
    width: 60px;
    height: 60px;
}

.disc text{
    fill: #fff;
    font-family: "Open Sans", sans-serif;
    font-weight: 300;
}

.disc .big{ font-size: 24px; }
.disc .pct{ font-size: 11px; }
```
